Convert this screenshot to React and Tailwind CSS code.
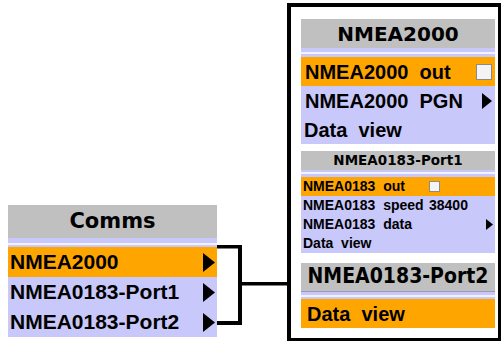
import React from "react";

const LAV = "bg-[#c8c8fa]";
const ROW = "font-['Liberation_Sans',Arial,sans-serif] font-bold text-black whitespace-pre";
const HEAD = "font-['DejaVu_Sans',Verdana,sans-serif] text-black text-center whitespace-pre";

function Arrow({ w = 11, h = 18 }) {
  return (
    <svg width={w} height={h} viewBox={`0 0 ${w} ${h}`} className="shrink-0">
      <polygon points={`0,0 ${w},${h / 2} 0,${h}`} fill="#000" />
    </svg>
  );
}

function Sep({ top = "h-[5px]", bottom = "h-[2px]" }) {
  return (
    <div className="flex flex-col">
      <div className={`${top} ${LAV}`} />
      <div className="h-[2px] bg-[#f2f2ff]" />
      <div className={`${bottom} ${LAV}`} />
    </div>
  );
}

function Check({ size = "w-[16px] h-[16px]" }) {
  return <div className={`${size} bg-[#f4f4f4] border border-[#8a8a8a] shrink-0`} />;
}

export default function App() {
  return (
    <div className="w-[501px] h-[341px] bg-white flex overflow-hidden">
      {/* Left Comms panel */}
      <div className="ml-[8px] mt-[205px] w-[209px] shrink-0 flex flex-col">
        <div className={`h-[33px] bg-[#c0c0c0] flex items-center justify-center ${HEAD} font-bold text-[21px]`}>
          Comms
        </div>
        <Sep top="h-[5px]" bottom="h-[2px]" />
        <div className={`h-[30px] bg-[#ffa500] flex items-center justify-between pl-[2px] pr-[2px] ${ROW} text-[21px]`}>
          <span>NMEA2000</span>
          <Arrow w={12} h={19} />
        </div>
        <div className={`h-[30px] ${LAV} flex items-center justify-between pl-[2px] pr-[2px] ${ROW} text-[21px]`}>
          <span>NMEA0183-Port1</span>
          <Arrow w={12} h={19} />
        </div>
        <div className={`h-[30px] ${LAV} flex items-center justify-between pl-[2px] pr-[2px] ${ROW} text-[21px]`}>
          <span>NMEA0183-Port2</span>
          <Arrow w={12} h={19} />
        </div>
      </div>

      {/* Connector bracket */}
      <div className="w-[70px] h-[341px] shrink-0">
        <svg width="70" height="341" viewBox="0 0 70 341">
          <rect x="0" y="245" width="25" height="3.5" fill="#000" />
          <rect x="21" y="245" width="4" height="80" fill="#000" />
          <rect x="0" y="321" width="25" height="4" fill="#000" />
          <rect x="25" y="282" width="45" height="3.5" fill="#000" />
        </svg>
      </div>

      {/* Right detail box */}
      <div className="mt-[3px] w-[215px] h-[339px] shrink-0 border-4 border-black pl-[10px] pr-[3px] pt-[12px] flex flex-col">
        {/* NMEA2000 */}
        <div className={`h-[29px] bg-[#c0c0c0] flex items-center justify-center ${HEAD} font-bold text-[20px]`}>
          NMEA2000
        </div>
        <Sep top="h-[4px]" bottom="h-[3px]" />
        <div className={`h-[29px] bg-[#ffa500] flex items-center justify-between pl-[4px] pr-[3px] ${ROW} text-[20px]`}>
          <span>NMEA2000  out</span>
          <Check />
        </div>
        <div className={`h-[29px] ${LAV} flex items-center justify-between pl-[4px] pr-[3px] ${ROW} text-[20px]`}>
          <span>NMEA2000  PGN</span>
          <Arrow w={10} h={16} />
        </div>
        <div className={`h-[29px] ${LAV} flex items-center pl-[3px] ${ROW} text-[20px]`}>
          <span>Data  view</span>
        </div>

        {/* NMEA0183-Port1 */}
        <div className={`mt-[7px] h-[19px] bg-[#c0c0c0] flex items-center justify-center ${HEAD} font-bold text-[13.5px]`}>
          NMEA0183-Port1
        </div>
        <Sep top="h-[2px]" bottom="h-[3px]" />
        <div className={`h-[19px] bg-[#ffa500] flex items-center pl-[2px] ${ROW} text-[14px]`}>
          <span className="w-[126px]">NMEA0183  out</span>
          <Check size="w-[11px] h-[11px]" />
        </div>
        <div className={`h-[19px] ${LAV} flex items-center pl-[2px] ${ROW} text-[14px]`}>
          <span className="w-[126px]">NMEA0183  speed</span>
          <span>38400</span>
        </div>
        <div className={`h-[19px] ${LAV} flex items-center justify-between pl-[2px] pr-[2px] ${ROW} text-[14px]`}>
          <span>NMEA0183  data</span>
          <Arrow w={7} h={11} />
        </div>
        <div className={`h-[19px] ${LAV} flex items-center pl-[2px] ${ROW} text-[14px]`}>
          <span>Data  view</span>
        </div>

        {/* NMEA0183-Port2 */}
        <div className={`mt-[10px] h-[29px] bg-[#c0c0c0] border-b border-[#9a9ab8] flex items-center justify-center font-['DejaVu_Sans_Condensed','DejaVu_Sans',sans-serif] font-bold text-black whitespace-pre text-[21px]`}>
          NMEA0183-Port2
        </div>
        <Sep top="h-[3px]" bottom="h-[2px]" />
        <div className={`h-[29px] bg-[#ffa500] flex items-center pl-[6px] ${ROW} text-[20px]`}>
          <span>Data  view</span>
        </div>
      </div>
    </div>
  );
}
